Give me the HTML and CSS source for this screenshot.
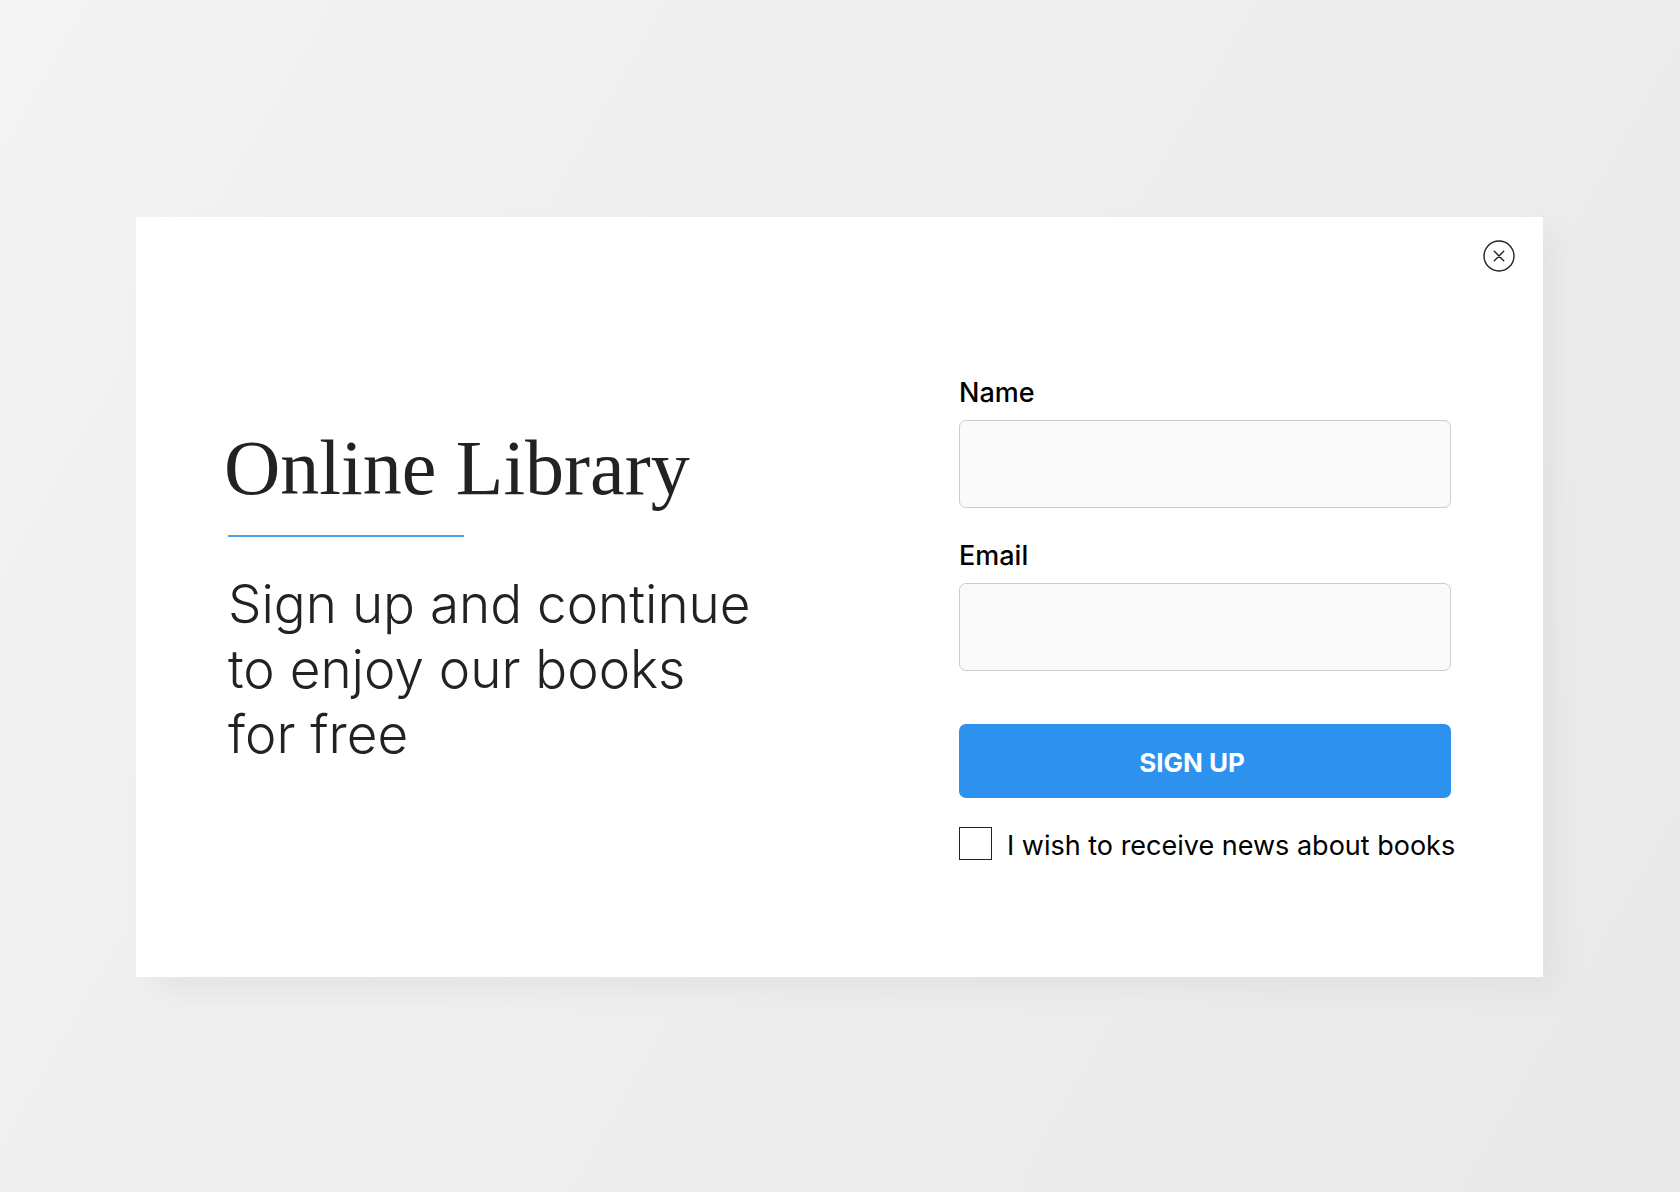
FILE: index.html
```html
<!DOCTYPE html>
<html lang="en">
<head>
<meta charset="utf-8">
<meta name="viewport" content="width=device-width, initial-scale=1">
<title>Online Library</title>
<link rel="stylesheet" href="styles.css">
</head>
<body>
<main class="page">
  <section class="card">
    <button class="close" type="button" aria-label="Close">
      <svg width="32" height="32" viewBox="0 0 32 32" fill="none" stroke="#222" stroke-width="1.4" stroke-linecap="round">
        <circle cx="16" cy="16" r="15"/>
        <path d="M11.3 11.3l9.4 9.4M20.7 11.3l-9.4 9.4"/>
      </svg>
    </button>
    <div class="intro">
      <h1 class="title">Online Library</h1>
      <div class="pitch">
        <hr class="rule">
        <p class="lead">Sign up and continue<br>to enjoy our books<br>for free</p>
      </div>
    </div>
    <form class="form">
      <div class="field">
        <label class="label" for="name">Name</label>
        <input class="input" id="name" type="text">
      </div>
      <div class="field">
        <label class="label" for="email">Email</label>
        <input class="input" id="email" type="email">
      </div>
      <button class="submit" type="submit">SIGN UP</button>
      <div class="news">
        <input class="check" id="news" type="checkbox">
        <label class="news-label" for="news">I wish to receive news about books</label>
      </div>
    </form>
  </section>
</main>
</body>
</html>
```
FILE: styles.css
```css
* {
  box-sizing: border-box;
}

body {
  margin: 0;
  font-family: Inter, "Liberation Sans", sans-serif;
  color: #000;
}

.page {
  display: grid;
  align-items: center;
  min-height: 100vh;
  padding: 41px 137px 40px 136px;
  background: linear-gradient(120deg, #f4f4f4 0%, #f0f0f0 22%, #eeeeee 50%, #ebebeb 80%, #e9e9e9 100%);
}

.card {
  position: relative;
  display: grid;
  grid-template-columns: 1fr minmax(0, 492px);
  gap: 40px;
  padding: 160px 92px 117px 88px;
  background: #fff;
  box-shadow: 16px 16px 24px -4px rgba(206, 204, 198, 0.32);
}

.close {
  position: absolute;
  top: 23px;
  right: 28px;
  width: 32px;
  height: 32px;
  padding: 0;
  border: 0;
  background: none;
  cursor: pointer;
}

.close svg {
  display: block;
}

.intro {
  padding-top: 47px;
}

.title {
  margin: 0;
  font-family: "Liberation Serif", serif;
  font-size: 78px;
  font-weight: 400;
  line-height: 88px;
  color: #222;
}

.pitch {
  padding: 23px 0 0 4px;
}

.rule {
  width: 236px;
  height: 2px;
  margin: 0 0 35px;
  border: 0;
  background: #4a9fec;
}

.lead {
  margin: 0;
  font-size: 53px;
  font-weight: 300;
  font-optical-sizing: none;
  line-height: 65px;
  color: #222;
}

.form {
  display: flex;
  flex-direction: column;
}

.field {
  display: flex;
  flex-direction: column;
  gap: 11px;
  margin-bottom: 32px;
}

.label {
  font-size: 27px;
  font-weight: 500;
  line-height: 32px;
}

.input {
  width: 100%;
  height: 88px;
  padding: 0 24px;
  border: 1px solid #ccc;
  border-radius: 7px;
  background: #fafafa;
  font: inherit;
  font-size: 27px;
}

.submit {
  height: 74px;
  margin-top: 21px;
  padding: 4px 26px 0 0;
  border: 0;
  border-radius: 7px;
  background: #2d92ee;
  color: #fff;
  font-family: inherit;
  font-size: 26px;
  font-weight: 700;
  cursor: pointer;
}

.news {
  display: flex;
  align-items: center;
  gap: 15px;
  margin-top: 29px;
}

.check {
  flex: none;
  width: 33px;
  height: 33px;
  margin: 0;
  border: 1px solid #222;
  background: #fff;
  appearance: none;
}

.check:checked {
  background: #2d92ee;
}

.news-label {
  padding-top: 4px;
  font-size: 27px;
  line-height: 29px;
  white-space: nowrap;
}
```
